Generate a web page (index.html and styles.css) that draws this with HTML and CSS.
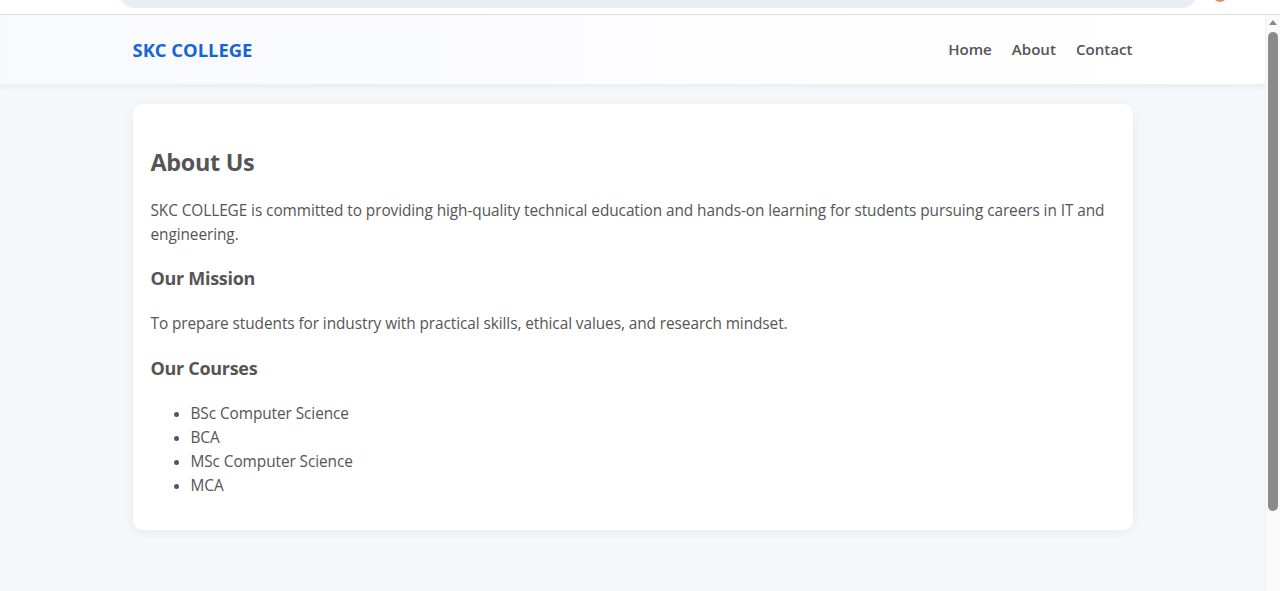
FILE: index.html
```html
<!DOCTYPE html>
<html lang="en">
<head>
<meta charset="utf-8">
<title>About Us - SKC COLLEGE</title>
<link rel="stylesheet" href="styles.css">
</head>
<body>
<div class="chrome">
  <div class="omnibox"></div>
  <div class="ext-dot"></div>
</div>
<div class="viewport">
  <div class="page">
    <header class="navbar">
      <div class="container nav-inner">
        <a class="logo" href="#">SKC COLLEGE</a>
        <nav class="nav-links">
          <a href="#">Home</a>
          <a href="#">About</a>
          <a href="#">Contact</a>
        </nav>
      </div>
    </header>
    <main class="container">
      <section class="card">
        <h2>About Us</h2>
        <p>SKC COLLEGE is committed to providing high-quality technical education and hands-on learning for students pursuing careers in IT and engineering.</p>
        <h3>Our Mission</h3>
        <p>To prepare students for industry with practical skills, ethical values, and research mindset.</p>
        <h3 class="courses-title">Our Courses</h3>
        <ul>
          <li>BSc Computer Science</li>
          <li>BCA</li>
          <li>MSc Computer Science</li>
          <li>MCA</li>
        </ul>
      </section>
    </main>
  </div>
  <div class="scrollbar">
    <div class="sb-arrow"></div>
    <div class="sb-thumb"></div>
  </div>
</div>
</body>
</html>
```

FILE: styles.css
```css
* { box-sizing: border-box; }
html, body { margin: 0; padding: 0; height: 100%; }
body {
  font-family: "Open Sans", "Noto Sans", sans-serif;
  color: #555;
  background: #f5f7fa;
  overflow: hidden;
  display: flex;
  flex-direction: column;
}
.chrome {
  height: 15px;
  background: #fff;
  border-bottom: 1px solid #dcdcdc;
  position: relative;
  flex: none;
}
.omnibox {
  position: absolute;
  left: 120px;
  top: -20px;
  width: 1076px;
  height: 28px;
  border-radius: 14px;
  background: #e9eef6;
}
.ext-dot {
  position: absolute;
  left: 1214px;
  top: -8px;
  width: 12px;
  height: 10px;
  border-radius: 50%;
  background: #e98a5c;
}
.viewport {
  flex: 1;
  display: flex;
  min-height: 0;
}
.page {
  flex: 1;
  background: #f5f7fa;
  overflow: hidden;
}
.scrollbar {
  width: 15px;
  flex: none;
  background: #fafafa;
  position: relative;
  border-left: 1px solid #f0f0f0;
}
.sb-arrow {
  position: absolute;
  left: 3px;
  top: 5px;
  width: 0; height: 0;
  border-left: 4px solid transparent;
  border-right: 4px solid transparent;
  border-bottom: 5px solid #8a8a8a;
}
.sb-thumb {
  position: absolute;
  left: 2px;
  top: 17px;
  width: 10px;
  height: 479px;
  border-radius: 5px;
  background: #8b8b8b;
}
.container {
  max-width: 1000px;
  margin: 0 auto;
}
.navbar {
  height: 70px;
  background: linear-gradient(90deg, #f8f9fc 0%, #fdfdfe 60%, #ffffff 100%);
  box-shadow: 0 2px 6px rgba(0,0,0,0.05);
  border-bottom: 1px solid #eef0f3;
}
.nav-inner {
  height: 100%;
  display: flex;
  align-items: center;
  justify-content: space-between;
}
.logo {
  color: #1664d6;
  font-weight: 700;
  font-size: 18.4px;
  text-decoration: none;
}
.nav-links {
  display: flex;
  gap: 20px;
  padding-bottom: 2px;
}
.nav-links a {
  color: #555;
  text-decoration: none;
  font-weight: 600;
  font-size: 15.1px;
}
main.container {
  padding-top: 19px;
}
.card {
  background: #fff;
  border-radius: 10px;
  box-shadow: 0 2px 12px rgba(0,0,0,0.06);
  padding: 20px 18px 18px;
}
.card h2 {
  font-size: 23.4px;
  font-weight: 700;
  margin: 22px 0 21px;
  line-height: 32px;
  letter-spacing: -0.3px;
}
.card p {
  font-size: 15.4px;
  line-height: 24px;
  margin: 0 0 16px;
  letter-spacing: -0.08px;
}
.card h3 {
  font-size: 18px;
  font-weight: 700;
  line-height: 24px;
  margin: 19px 0 22px;
  letter-spacing: -0.3px;
}
.card h3.courses-title {
  margin-top: 20px;
}
.card ul {
  margin: 22px 0 14px;
  padding-left: 40px;
  font-size: 15.4px;
  line-height: 24px;
  letter-spacing: -0.08px;
}
```
